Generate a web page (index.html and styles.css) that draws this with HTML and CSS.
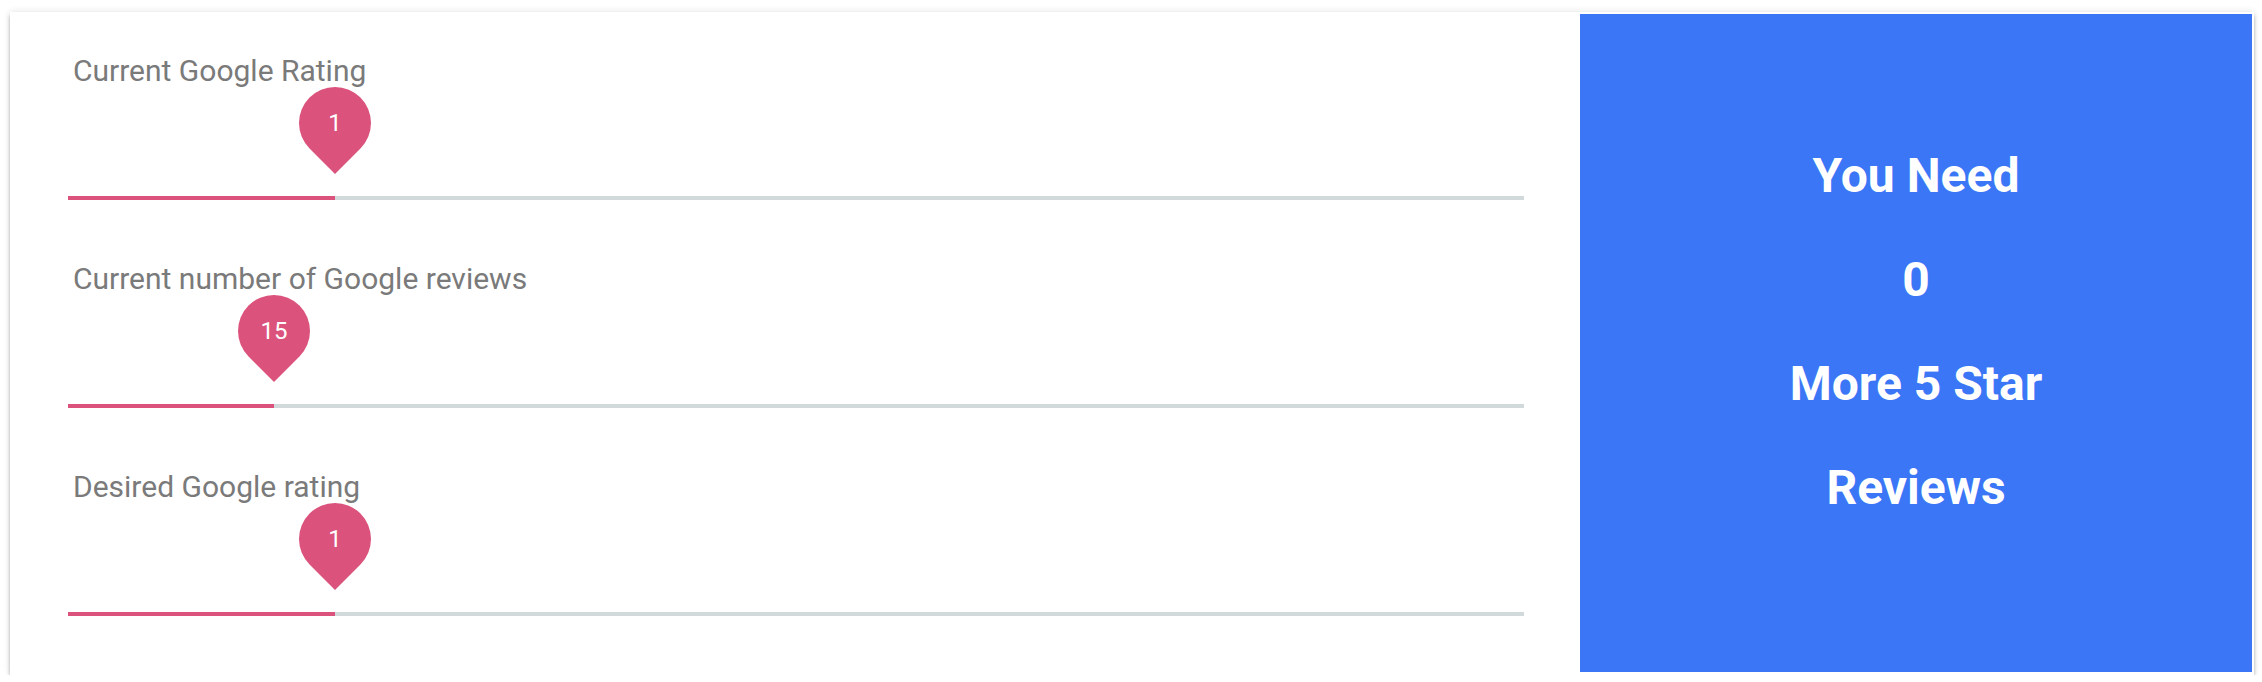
FILE: index.html
```html
<!DOCTYPE html>
<html lang="en">
<head>
<meta charset="utf-8">
<title>Review Calculator</title>
<link rel="stylesheet" href="styles.css">
</head>
<body>
<div class="card">
  <div class="inputs">
    <div class="field">
      <div class="label">Current Google Rating</div>
      <div class="slider">
        <div class="track">
          <div class="fill" style="width:267px"><span class="pin"><span class="pin-val">1</span></span></div>
        </div>
      </div>
    </div>
    <div class="field">
      <div class="label">Current number of Google reviews</div>
      <div class="slider">
        <div class="track">
          <div class="fill" style="width:206px"><span class="pin"><span class="pin-val">15</span></span></div>
        </div>
      </div>
    </div>
    <div class="field">
      <div class="label">Desired Google rating</div>
      <div class="slider">
        <div class="track">
          <div class="fill" style="width:267px"><span class="pin"><span class="pin-val">1</span></span></div>
        </div>
      </div>
    </div>
  </div>
  <div class="result">
    <div class="result-line">You Need</div>
    <div class="result-line">0</div>
    <div class="result-line">More 5 Star</div>
    <div class="result-line">Reviews</div>
  </div>
</div>
</body>
</html>
```
FILE: styles.css
```css
html, body {
  margin: 0;
  padding: 0;
  background: #ffffff;
}

body {
  font-family: Roboto, "Liberation Sans", Arial, sans-serif;
}

.card {
  margin: 12px 8px 0 10px;
  height: 663px;
  display: flex;
  background: #ffffff;
  padding: 2px 2px 3px 0;
  box-sizing: border-box;
  box-shadow: 0 3px 4px -1px rgba(0, 0, 0, 0.45), 0 0 7px rgba(0, 0, 0, 0.12);
}

.inputs {
  width: 1570px;
  flex: none;
  box-sizing: border-box;
  padding: 39px 56px 0 58px;
  display: flex;
  flex-direction: column;
}

.field {
  height: 208px;
  flex: none;
}

.label {
  font-size: 30px;
  line-height: 36px;
  color: #7a7a7a;
  padding-left: 5px;
}

.slider {
  height: 111px;
  display: flex;
  flex-direction: column;
  justify-content: flex-end;
}

.track {
  height: 4px;
  background: #d1d9db;
  position: relative;
}

.fill {
  height: 4px;
  background: #db527c;
  position: relative;
}

.pin {
  position: absolute;
  right: -36px;
  top: -109px;
  width: 72px;
  height: 72px;
  display: flex;
  align-items: center;
  justify-content: center;
}

.pin::before {
  content: "";
  position: absolute;
  inset: 0;
  background: #db527c;
  border-radius: 50% 50% 0 50%;
  transform: rotate(45deg);
}

.pin-val {
  position: relative;
  color: #ffffff;
  font-size: 24px;
  line-height: 24px;
}

.result {
  flex: 1;
  background: #3b76f6;
  color: #ffffff;
  display: flex;
  flex-direction: column;
  justify-content: center;
  align-items: center;
  padding-bottom: 23px;
}

.result-line {
  font-size: 48px;
  font-weight: 700;
  line-height: 104px;
}
```
